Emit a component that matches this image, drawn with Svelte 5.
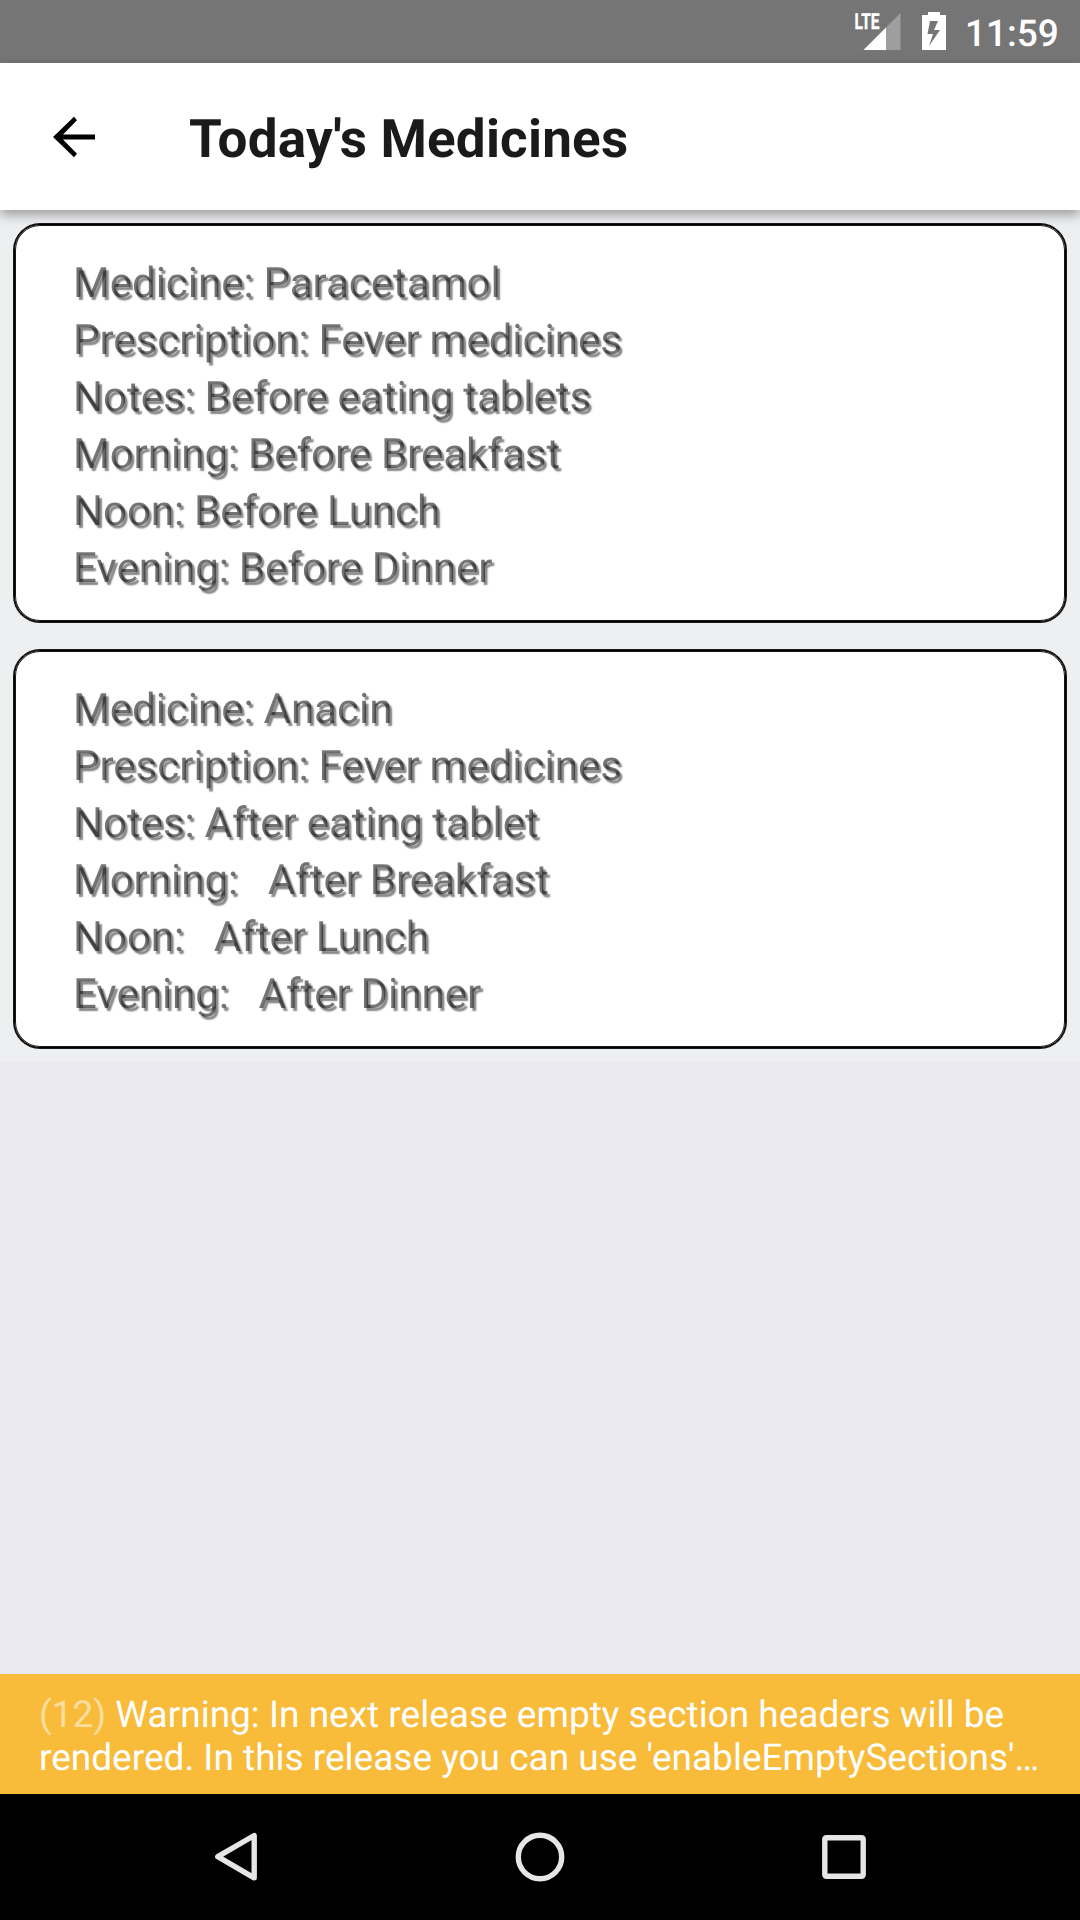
<script>
  const medicines = [
    [
      'Medicine: Paracetamol',
      'Prescription: Fever medicines',
      'Notes: Before eating tablets',
      'Morning: Before Breakfast',
      'Noon: Before Lunch',
      'Evening: Before Dinner',
    ],
    [
      'Medicine: Anacin',
      'Prescription: Fever medicines',
      'Notes: After eating tablet',
      'Morning:   After Breakfast',
      'Noon:   After Lunch',
      'Evening:   After Dinner',
    ],
  ];
</script>

<div class="screen">
  <div class="status">
    <svg class="signal" width="48" height="44" viewBox="-2 -6 48 44">
      <path d="M45.5 0V37H8.5Z" fill="#fff" fill-opacity=".3" />
      <path d="M31 14.5V37H8.5Z" fill="#fff" />
      <text x="-0.5" y="16" textLength="25" lengthAdjust="spacingAndGlyphs">LTE</text>
    </svg>
    <svg class="battery" width="24" height="38" viewBox="0 0 24 38">
      <path fill="#fff" fill-rule="evenodd" d="M6 0H18V3H24V38H0V3H6ZM8 9L5.5 22H11L7 34L18 18H12L16 9Z" />
    </svg>
    <span class="clock">11:59</span>
  </div>

  <header class="bar">
    <svg class="back" width="42" height="42" viewBox="0 0 42 42">
      <path d="M42 18.4V23.6H10L24 37.8L21 41.3L0 21L21 .7L24 4.2L10 18.4Z" fill="#000" />
    </svg>
    <h1>Today's Medicines</h1>
  </header>

  <main>
    <div class="list">
      {#each medicines as lines}
        <section class="card">
          {#each lines as line}
            <p>{line}</p>
          {/each}
        </section>
      {/each}
    </div>
  </main>

  <div class="warning">
    <div><span class="count">(12)</span> Warning: In next release empty section headers will be</div>
    <div>rendered. In this release you can use 'enableEmptySections'…</div>
  </div>

  <nav>
    <svg width="60" height="60" viewBox="0 0 60 60">
      <path d="M48.2 8.5V50.8L11.8 29.7Z" />
    </svg>
    <svg width="60" height="60" viewBox="0 0 60 60">
      <circle cx="30" cy="30" r="21.7" />
    </svg>
    <svg width="60" height="60" viewBox="0 0 60 60">
      <rect x="10.8" y="10.8" width="38.4" height="38.4" rx="1.5" />
    </svg>
  </nav>
</div>

<style>
  :global(body) {
    margin: 0;
  }

  .screen {
    display: flex;
    flex-direction: column;
    width: 1080px;
    height: 1920px;
    overflow: hidden;
    background: #e9e9ef;
    font-family: Roboto, sans-serif;
    text-rendering: geometricPrecision;
  }

  .status {
    display: flex;
    align-items: flex-start;
    box-sizing: border-box;
    height: 63px;
    padding: 7px 0 0 853px;
    background: #757575;
    color: #fff;
  }

  .signal text {
    fill: #fff;
    stroke: #fff;
    stroke-width: .4px;
    font-size: 22px;
    font-weight: 700;
  }

  .battery {
    margin: 5px 0 0 21px;
  }

  .clock {
    margin: 6px 0 0 19px;
    font-size: 37px;
    font-weight: 500;
    line-height: 43px;
  }

  .bar {
    position: relative;
    z-index: 1;
    display: flex;
    align-items: center;
    height: 147px;
    padding-left: 53px;
    background: #fff;
    box-shadow: 0 5px 11px rgba(0, 0, 0, .34);
  }

  .back {
    display: block;
  }

  h1 {
    margin: 4px 0 0 94px;
    color: #1a1a1a;
    font-size: 53px;
    font-weight: 700;
    letter-spacing: .2px;
    line-height: 62px;
  }

  main {
    flex: 1;
  }

  .list {
    display: flex;
    flex-direction: column;
    gap: 28px;
    padding: 14px 14px;
    background: #eeeff1;
  }

  .card {
    box-sizing: border-box;
    height: 398px;
    padding: 30px 58px;
    border: 1px solid #000;
    border-radius: 26px;
    background: #fff;
    box-shadow:
      0 0 0 1px rgba(0, 0, 0, .9),
      inset 0 0 0 1px rgba(0, 0, 0, .9);
  }

  p {
    margin: 0;
    color: rgba(0, 0, 0, .54);
    font-size: 42px;
    line-height: 57px;
    white-space: pre;
    word-spacing: -.6px;
    text-shadow: 2.5px 2.6px 1.5px rgba(0, 0, 0, .48);
    will-change: transform;
  }

  .warning {
    box-sizing: border-box;
    height: 120px;
    padding: 20px 39px 0;
    background: #f8bb3a;
    color: #fff;
    font-size: 37px;
    line-height: 43px;
    white-space: nowrap;
  }

  .count {
    opacity: .5;
  }

  nav {
    display: flex;
    justify-content: center;
    gap: 244px;
    box-sizing: border-box;
    height: 126px;
    padding-top: 33px;
    background: #000;
  }

  nav svg {
    fill: none;
    stroke: #e6e6e6;
    stroke-width: 5.4;
    stroke-linejoin: round;
  }
</style>
